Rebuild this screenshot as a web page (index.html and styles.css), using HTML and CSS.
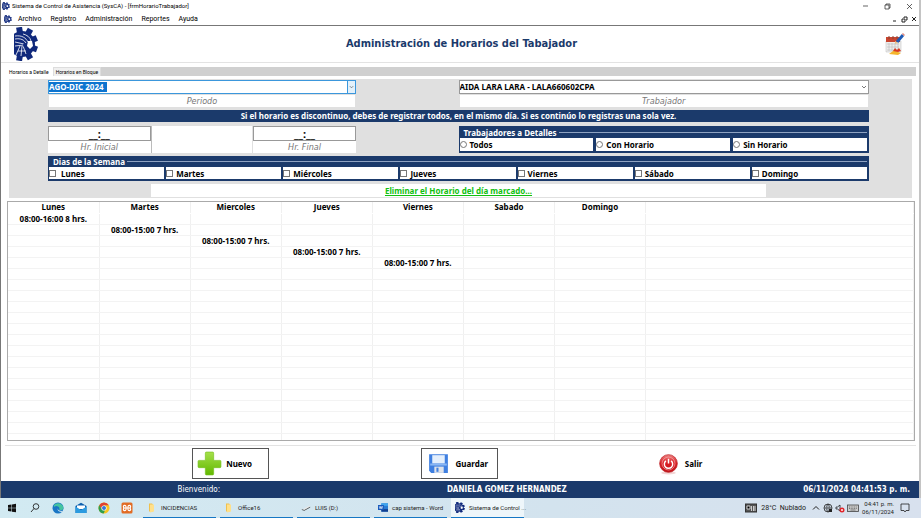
FILE: index.html
```
<!DOCTYPE html>
<html lang="es">
<head>
<meta charset="utf-8">
<title>Sistema de Control de Asistencia (SysCA)</title>
<link rel="stylesheet" href="styles.css">
</head>
<body>
<svg class="defs" aria-hidden="true">
  <symbol id="gear" viewBox="0 0 24 34" preserveAspectRatio="none">
    <g fill="#10297c">
      <circle cx="8" cy="17" r="13"/>
      <path d="M5 0h6v6H5z" transform="rotate(-10 8 17)"/>
      <path d="M5 0h6v6H5z" transform="rotate(30 8 17)"/>
      <path d="M5 1h6v6H5z" transform="rotate(68 8 17)"/>
      <path d="M5 1h6v6H5z" transform="rotate(110 8 17)"/>
      <path d="M5 0h6v6H5z" transform="rotate(150 8 17)"/>
      <path d="M5 0h6v6H5z" transform="rotate(190 8 17)"/>
    </g>
    <path fill="none" stroke="#fff" stroke-width=".8" d="M1 9c7-1 11 2 13 6M1 12c6-1 9 1 11 4M1 15l9 2M1 19l9-1M2 28l4-9M7 29l1-10M12 27l-3-8M4 24l8 0M9 7c4 1 7 3 8 7"/>
    <path fill="#fff" d="M14 14l4 0 1 5-3 3-3-3z"/>
    <circle cx="11" cy="18" r="2" fill="#10297c"/>
  </symbol>
  <symbol id="folder" viewBox="0 0 10 10">
    <path fill="#f0c14e" d="M2 1h3l1 1v7H2z"/><path fill="#ffe08a" d="M3 2h4v7l-4 1z"/>
  </symbol>
  <symbol id="chevron" viewBox="0 0 6 6"><path d="M1 2l2 2 2-2" fill="none" stroke="#555" stroke-width=".8"/></symbol>
</svg>

<div class="window">
  <header class="titlebar">
    <svg class="mini"><use href="#gear"/></svg>
    <span class="grow">Sistema de Control de Asistencia (SysCA) - [frmHorarioTrabajador]</span>
    <div class="winbuttons">
      <button aria-label="Minimizar"><svg viewBox="0 0 8 8"><path d="M2 4h5"/></svg></button>
      <button aria-label="Restaurar"><svg viewBox="0 0 8 8"><path d="M2 3h4v4H2zM3 3V2h4v4H6"/></svg></button>
      <button aria-label="Cerrar"><svg viewBox="0 0 8 8"><path d="M2 2l5 5M7 2l-5 5"/></svg></button>
    </div>
  </header>
  <nav class="menubar">
    <svg class="mini"><use href="#gear"/></svg>
    <div class="menus">
      <a href="#">Archivo</a><a href="#">Registro</a><a href="#">Administración</a><a href="#">Reportes</a><a href="#">Ayuda</a>
    </div>
    <div class="childbuttons">
      <button aria-label="Minimizar ventana"><svg viewBox="0 0 8 8"><path d="M3 6h3"/></svg></button>
      <button aria-label="Restaurar ventana"><svg viewBox="0 0 8 8"><path d="M2 4h3v3H2zM4 3V2h3v3H6"/></svg></button>
      <button aria-label="Cerrar ventana"><svg viewBox="0 0 8 8"><path d="M2 2l4 4M6 2l-4 4"/></svg></button>
    </div>
  </nav>

  <section class="heading">
    <svg class="logo"><use href="#gear"/></svg>
    <h1>Administración de Horarios del Tabajador</h1>
    <svg class="calendar" viewBox="0 0 20 22">
      <path fill="#eee" stroke="#bbb" stroke-width=".5" d="M1 8h15v11H1z"/>
      <path fill="#c94530" d="M1 4h14v5H1z"/>
      <path stroke="#843" stroke-width="1" d="M4 3v3M8 3v3M12 3v3"/>
      <path stroke="#bbb" stroke-width=".6" d="M2 11h12M2 14h12M2 17h12M4 10v8M7 10v8M10 10v8M13 10v8"/>
      <path fill="#f5b52c" d="M4 21l4-3 2-1 3 2 3 1-3 2z"/>
      <path fill="#d83a22" d="M8 18l2-3 2 2 2-2 2 3-3 1z"/>
      <path stroke="#1e5bb5" stroke-width="3" d="M12 9l6-7"/>
      <path stroke="#e58c80" stroke-width="3" d="M18 2l1-1"/>
      <path fill="#e8c48c" d="M10 8l3 2-3 1z"/>
    </svg>
  </section>

  <div class="tabs" role="tablist">
    <button class="tab active" role="tab" aria-selected="true">Horarios a Detalle</button>
    <button class="tab" role="tab" aria-selected="false">Horarios en Bloque</button>
  </div>

  <main class="page">
    <form class="form">
      <div class="row">
        <div class="field span3">
          <div class="combo focus">
            <select id="periodo"><option>AGO-DIC 2024</option></select>
            <svg class="arrow"><use href="#chevron"/></svg>
          </div>
          <label class="caption" for="periodo">Periodo</label>
        </div>
        <div class="field span4">
          <div class="combo">
            <select id="trabajador"><option>AIDA LARA LARA - LALA660602CPA</option></select>
            <svg class="arrow"><use href="#chevron"/></svg>
          </div>
          <label class="caption" for="trabajador">Trabajador</label>
        </div>
      </div>
      <p class="notice">Si el horario es discontinuo, debes de registrar todos, en el mismo día. Si es continúo lo registras una sola vez.</p>
      <div class="row">
        <div class="times span3">
          <div><input class="time" id="inicial" value="__:__"><label class="caption" for="inicial">Hr. Inicial</label></div>
          <div class="between"></div>
          <div><input class="time" id="final" value="__:__"><label class="caption" for="final">Hr. Final</label></div>
        </div>
        <fieldset class="group span4">
          <legend>Trabajadores a Detalles</legend>
          <div class="options">
            <label><input type="radio" name="detalle">Todos</label>
            <label><input type="radio" name="detalle">Con Horario</label>
            <label><input type="radio" name="detalle">Sin Horario</label>
          </div>
        </fieldset>
      </div>
      <fieldset class="group days">
        <legend>Dias de la Semana</legend>
        <div class="options">
          <label><input type="checkbox">Lunes</label>
          <label><input type="checkbox">Martes</label>
          <label><input type="checkbox">Miércoles</label>
          <label><input type="checkbox">Jueves</label>
          <label><input type="checkbox">Viernes</label>
          <label><input type="checkbox">Sábado</label>
          <label><input type="checkbox">Domingo</label>
        </div>
      </fieldset>
      <div class="row"><a class="remove" href="#">Eliminar el Horario del día marcado...</a></div>
    </form>

    <div class="schedule">
      <table>
        <thead><tr><th>Lunes</th><th>Martes</th><th>Miercoles</th><th>Jueves</th><th>Viernes</th><th>Sabado</th><th>Domingo</th><th class="rest"></th></tr></thead>
        <tbody>
          <tr><td>08:00-16:00 8 hrs.</td><td></td><td></td><td></td><td></td><td></td><td></td><td></td></tr>
          <tr><td></td><td>08:00-15:00 7 hrs.</td><td></td><td></td><td></td><td></td><td></td><td></td></tr>
          <tr><td></td><td></td><td>08:00-15:00 7 hrs.</td><td></td><td></td><td></td><td></td><td></td></tr>
          <tr><td></td><td></td><td></td><td>08:00-15:00 7 hrs.</td><td></td><td></td><td></td><td></td></tr>
          <tr><td></td><td></td><td></td><td></td><td>08:00-15:00 7 hrs.</td><td></td><td></td><td></td></tr>
          <tr><td></td><td></td><td></td><td></td><td></td><td></td><td></td><td></td></tr>
          <tr><td></td><td></td><td></td><td></td><td></td><td></td><td></td><td></td></tr>
          <tr><td></td><td></td><td></td><td></td><td></td><td></td><td></td><td></td></tr>
          <tr><td></td><td></td><td></td><td></td><td></td><td></td><td></td><td></td></tr>
          <tr><td></td><td></td><td></td><td></td><td></td><td></td><td></td><td></td></tr>
          <tr><td></td><td></td><td></td><td></td><td></td><td></td><td></td><td></td></tr>
          <tr><td></td><td></td><td></td><td></td><td></td><td></td><td></td><td></td></tr>
          <tr><td></td><td></td><td></td><td></td><td></td><td></td><td></td><td></td></tr>
          <tr><td></td><td></td><td></td><td></td><td></td><td></td><td></td><td></td></tr>
          <tr><td></td><td></td><td></td><td></td><td></td><td></td><td></td><td></td></tr>
          <tr><td></td><td></td><td></td><td></td><td></td><td></td><td></td><td></td></tr>
          <tr><td></td><td></td><td></td><td></td><td></td><td></td><td></td><td></td></tr>
          <tr><td></td><td></td><td></td><td></td><td></td><td></td><td></td><td></td></tr>
          <tr><td></td><td></td><td></td><td></td><td></td><td></td><td></td><td></td></tr>
          <tr><td></td><td></td><td></td><td></td><td></td><td></td><td></td><td></td></tr>
          <tr><td></td><td></td><td></td><td></td><td></td><td></td><td></td><td></td></tr>
        </tbody>
      </table>
    </div>
  </main>

  <div class="actions">
    <button class="action">
      <svg viewBox="0 0 24 24"><defs><linearGradient id="green" x2="0" y2="1"><stop stop-color="#a5e04a"/><stop offset="1" stop-color="#62b800"/></linearGradient></defs><path fill="url(#green)" stroke="#74bf1c" stroke-width=".6" d="M9 1h6q1 0 1 1v7h6q1 0 1 1v5q0 1-1 1h-6v6q0 1-1 1H9q-1 0-1-1v-6H2q-1 0-1-1v-5q0-1 1-1h6V2q0-1 1-1z"/></svg>
      <span>Nuevo</span>
    </button>
    <button class="action">
      <svg viewBox="0 0 24 24"><path fill="#3f7fe0" d="M3 3h18v18H5l-2-2z"/><path fill="#e4effc" d="M6 4h12v8H6z"/><path fill="#8bb7f3" d="M4 12h16v2H4z"/><path fill="#dfe3ea" d="M8 15h9v6H8z"/><path fill="#3f7fe0" d="M10 16h2v4h-2z"/></svg>
      <span>Guardar</span>
    </button>
    <button class="action plain">
      <svg viewBox="0 0 24 24"><defs><linearGradient id="red" x2="0" y2="1"><stop stop-color="#ef8080"/><stop offset=".5" stop-color="#d91e24"/><stop offset="1" stop-color="#c1141a"/></linearGradient></defs><ellipse cx="12" cy="21" rx="7" ry="1.5" fill="#f3d5d5"/><circle cx="12" cy="12" r="8.500" fill="url(#red)" stroke="#b91c20" stroke-width=".7"/><circle cx="12" cy="12" r="6.200" fill="none" stroke="#f3b0b0" stroke-width=".6"/><path fill="none" stroke="#fff" stroke-width="1.4" d="M9.500 9.500a4 4 0 1 0 5 0M12 7.500v4.500"/></svg>
      <span>Salir</span>
    </button>
  </div>

  <div class="status"><span class="welcome">Bienvenido:</span><b class="user">DANIELA GOMEZ HERNANDEZ</b><b class="clock">06/11/2024 04:41:53 p. m.</b></div>
</div>

<footer class="taskbar">
  <div class="launch">
    <button aria-label="Inicio"><svg viewBox="0 0 12 12"><path fill="#111" d="M2 3l3.500-.5v3.300H2zM6 2.400l4-.6v4H6zM2 6.300h3.500v3.300L2 9zM6 6.300h4v4l-4-.6z"/></svg></button>
    <button aria-label="Buscar"><svg viewBox="0 0 12 12"><circle cx="7" cy="4.500" r="2.800" fill="none" stroke="#222" stroke-width=".9"/><path stroke="#222" stroke-width=".9" d="M5 6.500L2 10"/></svg></button>
    <button aria-label="Edge"><svg viewBox="0 0 12 12"><circle cx="6" cy="6" r="5.500" fill="#1976c5"/><path fill="#45c4a0" d="M2 3a5.500 5.500 0 0 1 9.500 3q0 2-2.500 2.200-2 0-1.800-1Q8 5.500 6 4.500 4 3.500 2 5z"/><path fill="#d6ebf3" d="M6 6q-1 3 4.500 3L9.500 10Q4.500 9.500 6 6z"/></svg></button>
    <button aria-label="Correo"><svg viewBox="0 0 12 12"><path fill="#0b5fae" d="M.5 4L6 .8 11.500 4v7H.5z"/><path fill="#fff" d="M2 3.500h8V7H2z"/><path fill="#2b9be0" d="M.5 4.500L6 8l5.500-3.500V11H.5z"/></svg></button>
    <button aria-label="Chrome"><svg viewBox="0 0 12 12"><circle cx="6" cy="6" r="5.500" fill="#f7c520"/><path fill="#df4132" d="M1.200 3.300a5.500 5.500 0 0 1 9.600 0H6L3.700 7.300z"/><path fill="#2f9e4d" d="M1.200 3.300L4 7.500l3 .8-1.300 3.200A5.500 5.500 0 0 1 1.200 3.300z"/><circle cx="6" cy="6" r="2.600" fill="#fff"/><circle cx="6" cy="6" r="2" fill="#3576d8"/></svg></button>
    <button aria-label="XAMPP"><svg viewBox="0 0 12 12"><rect x=".5" y=".5" width="11" height="11" rx="1.500" fill="#e26c25"/><path fill="none" stroke="#fff" stroke-width="1.200" d="M4.500 6H3.800A1.300 1.300 0 1 1 5 4.500v3A1.300 1.300 0 1 1 3.800 6h4.400A1.300 1.300 0 1 0 7 4.500v3A1.300 1.300 0 1 0 8.200 6"/></svg></button>
  </div>
  <div class="tasks">
    <button class="task"><svg><use href="#folder"/></svg>INCIDENCIAS</button>
    <button class="task"><svg><use href="#folder"/></svg>Office16</button>
    <button class="task"><svg viewBox="0 0 12 12"><path fill="#e8e8e8" d="M2 8l8-4 1 1-7 4z"/><path fill="#444" d="M1 8l3 1 7-4v1L4 10 1 9z"/></svg>LUIS (D:)</button>
    <button class="task"><svg viewBox="0 0 12 12"><path fill="#2b7cd3" d="M4 1h8v10H4z"/><path fill="#41a5ee" d="M4 1h8v3H4z"/><path fill="#103f91" d="M4 8h8v3H4z"/><path fill="#185abd" d="M0 3h7v6H0z"/><path fill="none" stroke="#fff" stroke-width=".8" d="M1.500 4.500l1 3 1-3 1 3 1-3"/></svg>cap sistema - Word</button>
    <button class="task current"><svg><use href="#gear"/></svg>Sistema de Control ...</button>
  </div>
  <div class="tray">
    <svg class="news" viewBox="0 0 12 10"><rect x=".5" y="1" width="11" height="8" fill="#555" stroke="#333"/><path stroke="#ddd" stroke-width=".9" d="M2 3h3v3H2zM6.500 3v5M8.500 3v5M10 3v5"/></svg>
    <span class="weather">28°C&nbsp; Nublado</span>
    <svg viewBox="0 0 10 10"><path fill="none" stroke="#222" d="M2 6.500l3-3 3 3"/></svg>
    <svg viewBox="0 0 10 10"><circle cx="5" cy="5" r="4" fill="none" stroke="#222" stroke-width=".8"/><path fill="none" stroke="#222" stroke-width=".6" d="M1 5h8M5 1v8M5 1q-4 4 0 8M5 1q4 4 0 8"/><path fill="#222" d="M6 6h3v3H6z"/></svg>
    <svg viewBox="0 0 10 10"><path fill="none" stroke="#222" stroke-width=".8" d="M1 4h1.500L5 2v6L2.500 6H1z"/><circle cx="7" cy="7" r="2.500" fill="#e0252c"/><path stroke="#fff" stroke-width=".7" d="M6 6l2 2M8 6l-2 2"/></svg>
    <svg class="news" viewBox="0 0 12 10"><rect x=".5" y="2" width="11" height="6.500" fill="#ccc" stroke="#444" stroke-width=".8"/><path stroke="#555" stroke-width=".7" stroke-dasharray="1 .7" d="M2 4h8M2 5.500h8"/><path stroke="#555" stroke-width=".7" d="M3.500 7h5"/></svg>
    <time>04:41 p. m.<br>06/11/2024</time>
    <svg class="note" viewBox="0 0 10 10"><path fill="none" stroke="#222" stroke-width=".8" d="M1 1h8v6.500H6L5 9 4 7.500H1z"/></svg>
  </div>
</footer>
</body>
</html>
```
FILE: styles.css
```
* { box-sizing: border-box; }

:root {
  --navy: #1b3a6b;
  --panel: #e0e0e0;
  --ui: Roboto, "Noto Sans", sans-serif;
  --form: "Noto Sans", "DejaVu Sans", sans-serif;
  --display: "DejaVu Sans Condensed", "DejaVu Sans", sans-serif;
}

body {
  margin: 0;
  min-height: 100vh;
  display: flex;
  flex-direction: column;
  background: #fff;
  color: #000;
  font: 7px/10px var(--ui);
}

.defs { position: absolute; width: 0; height: 0; }
button, input, select { font: inherit; color: inherit; margin: 0; padding: 0; border: 0; background: none; }
button { display: flex; align-items: center; justify-content: center; }
a { color: inherit; text-decoration: none; }

.window {
  flex: 1;
  display: flex;
  flex-direction: column;
  border-left: 1px solid #777;
  border-right: 2px solid #c4c4c4;
}

.titlebar, .menubar { display: flex; align-items: center; }
.titlebar { height: 12px; padding: 0 4px 0 1px; gap: 2px; font-size: 6px; }
.menubar { height: 14px; padding: 0 1px 0 3px; gap: 6px; border-bottom: 1px solid #777; }
.mini { width: 8px; height: 8px; }
.grow, .menus { flex: 1; }
.menus { display: flex; gap: 9px; }
.winbuttons, .childbuttons { display: flex; }
.winbuttons { gap: 14px; padding-right: 2px; }
.childbuttons { gap: 2px; }
.winbuttons svg, .childbuttons svg { width: 8px; height: 8px; fill: none; stroke: #222; stroke-width: .7; }
.childbuttons svg { stroke-width: 1; }

.heading {
  height: 37px;
  display: flex;
  align-items: center;
  padding: 0 14px 0 13px;
  border-bottom: 1px solid #e3e3e3;
}
.logo { width: 24px; height: 34px; }
.calendar { width: 20px; height: 22px; }
h1 { flex: 1; margin: 0; text-align: center; color: var(--navy); font: bold 11px/14px var(--display); }

.tabs {
  display: flex;
  align-items: flex-end;
  margin: 3px 3px 0 4px;
  height: 10px;
  background: linear-gradient(#fff 1px, #d0d0d0 1px);
  font-size: 5px;
}
.tab { height: 9px; padding: 0 2px; background: #f0f0f0; border: 1px solid #ddd; border-bottom: 0; line-height: 8px; }
.tab.active { height: 10px; padding: 0 3px; background: #fff; border-color: #fff; }

.page {
  flex: 1;
  display: flex;
  flex-direction: column;
  gap: 3px;
  margin: 0 3px 0 4px;
  padding: 3px 1px 4px 2px;
  border-bottom: 1px solid #e3e3e3;
  font: bold 8px/11px var(--form);
}

.form {
  display: flex;
  flex-direction: column;
  gap: 3px;
  margin: 0 3px 0 2px;
  padding: 1px 43px 1px 39px;
  background: var(--panel);
}
.row { display: grid; grid-template-columns: repeat(8, 1fr); }
.span3 { grid-column: 1 / 4; }
.span4 { grid-column: 5 / 9; }

.field { display: flex; flex-direction: column; gap: 1px; }
.combo { position: relative; height: 14px; background: #fff; border: 1px solid #999; }
.combo select { display: block; width: 100%; height: 12px; appearance: none; font: inherit; line-height: 12px; }
.combo.focus { border-color: #3b97dc; }
.combo.focus select {
  color: #fff;
  background: linear-gradient(#0d74cf, #0d74cf) 0 1px / 58px 10px no-repeat;
}
.combo.focus option { color: #000; }
.arrow { position: absolute; right: 0; top: 0; width: 8px; height: 12px; padding: 2px 1px; pointer-events: none; }
.combo.focus .arrow { background: #e3f1fb; border-left: 1px solid #3b97dc; }
.caption {
  display: block;
  height: 12px;
  margin: 0 1px;
  background: #fff;
  color: #777;
  text-align: center;
  font: italic 9px/12px var(--display);
}

.notice { margin: 0; height: 12px; line-height: 12px; text-align: center; background: var(--navy); color: #fff; }

.times { display: grid; grid-template-columns: repeat(3, 1fr); margin-top: 1px; background: #fff; }
.times .caption { margin: 0; }
.between { border-right: 1px solid #e0e0e0; border-left: 1px solid #bbb; }
.time { display: block; width: 100%; height: 15px; border: 1px solid #999; background: #fff; text-align: center; font: bold 11px/13px var(--form); }

.group { min-width: 0; margin: 1px 0 0; padding: 0 2px 2px 1px; border: 0; background: var(--navy); }
.group legend {
  float: left;
  width: 100%;
  display: flex;
  align-items: center;
  gap: 2px;
  padding: 0 0 0 4px;
  height: 12px;
  color: #fff;
}
.group legend::after { content: ""; flex: 1; height: 1px; background: #8fa3c2; }
.options { clear: both; display: grid; grid-auto-flow: column; grid-auto-columns: 1fr; gap: 3px; }
.options label { display: flex; align-items: center; gap: 3px; height: 13px; background: #fff; }
.options input { appearance: none; width: 7px; height: 7px; border: 1px solid #777; background: #fff; }
.options input[type="radio"] { border-radius: 50%; }
.days { margin-top: 0; }
.days legend { height: 11px; }
.days .options { gap: 2px; }
.days .options label { height: 12px; }
.days .options label:first-child { gap: 5px; }

.remove { grid-column: 2 / 8; height: 13px; line-height: 13px; background: #fff; text-align: center; color: #10c010; text-decoration: underline; }

.schedule { flex: 1 1 0; overflow: hidden; border: 1px solid #aaa; background: #fff; }
table { width: 100%; border-collapse: collapse; table-layout: fixed; }
th { width: 10.06%; }
th.rest { width: auto; }
th, td { height: 11px; padding: 0; text-align: center; line-height: 10px; border-right: 1px solid #f0f0f0; border-bottom: 1px solid #f3f3f3; }
th { border-bottom-color: #fff; }

.actions {
  display: grid;
  grid-template-columns: repeat(3, 1fr);
  height: 35px;
  padding: 0 115px;
  align-items: center;
}
.action { justify-self: center; width: 77px; height: 31px; gap: 4px; padding: 0 4px; justify-content: flex-start; border: 1px solid #555; font: bold 8px/10px var(--form); }
.action.plain { border-color: transparent; }
.action svg { width: 25px; height: 25px; }

.status {
  display: grid;
  grid-template-columns: 43fr 25fr 32fr;
  height: 17px;
  line-height: 17px;
  padding: 0 9px 0 3px;
  background: var(--navy);
  color: #fff;
  text-align: center;
  font-family: var(--display);
  font-size: 8px;
}
.clock { text-align: right; }

.taskbar {
  display: flex;
  align-items: center;
  height: 20px;
  padding: 0 11px 0 4px;
  background: linear-gradient(90deg, #d2eaf2, #d3e3ee 60%, #d8e1ee);
  color: #222;
  font-size: 6px;
}
.launch { display: flex; gap: 7px; }
.launch button { width: 16px; }
.launch svg { width: 12px; height: 12px; }
.tasks { display: flex; gap: 4px; margin-left: 8px; height: 20px; }
.task { width: 73px; gap: 4px; padding: 0 4px; justify-content: flex-start; border-bottom: 1px solid #1677c4; white-space: nowrap; }
.task svg { flex: none; width: 10px; height: 11px; }
.task.current { background: #eef6fa; }
.tray { display: flex; align-items: center; gap: 2px; margin-left: auto; }
.tray svg { width: 10px; height: 10px; }
.tray .news { width: 12px; }
.weather { margin: 0 3px 0 2px; font-size: 7px; }
time { margin: 0 4px 0 1px; text-align: right; line-height: 8px; font-size: 6px; }
```
